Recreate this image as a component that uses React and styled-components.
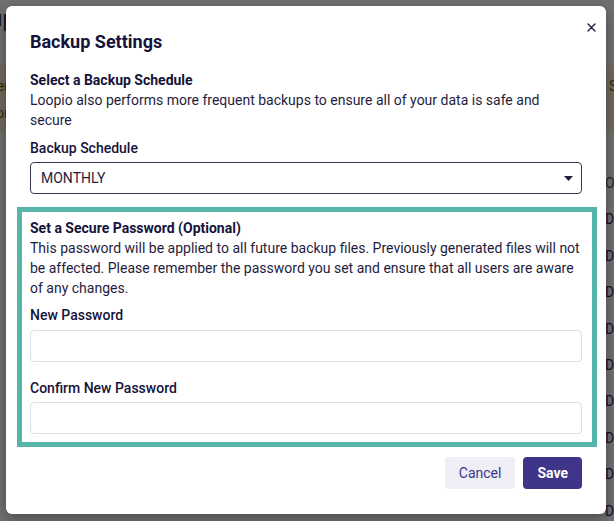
import React from "react";
import styled, { createGlobalStyle } from "styled-components";

const GlobalStyle = createGlobalStyle`
  html, body { margin: 0; padding: 0; }
  body { font-family: Roboto, "Liberation Sans", Arial, sans-serif; }
  * { box-sizing: border-box; }
`;

const Page = styled.div`
  position: relative;
  width: 614px;
  height: 521px;
  overflow: hidden;
  background: #ffffff;
`;

/* ---------- background application (behind the overlay) ---------- */
const BgApp = styled.div`
  display: flex;
  flex-direction: column;
  margin-left: -60px;
  width: 740px;
  color: #1c1a3d;
`;

const BgHeader = styled.div`
  display: flex;
  flex-direction: column;
  gap: 4px;
  padding: 6px 0 0 0;
  height: 65px;
`;

const BgTitle = styled.div`
  font-size: 22px;
  line-height: 26px;
  color: #333;
  padding-left: 2px;
`;

const BgSub = styled.div`
  font-size: 12px;
  color: #666;
  padding-left: 3px;
`;

const Banner = styled.div`
  display: flex;
  justify-content: space-between;
  background: #fff2d4;
  height: 68px;
  padding: 8px 0;
  color: #8a5a00;
  font-size: 14px;
  line-height: 27px;
`;

const BannerText = styled.div`
  width: 69px;
  text-align: right;
  white-space: nowrap;
`;

const BannerRight = styled.div`
  width: 71px;
  white-space: nowrap;
`;

const BgTable = styled.div`
  display: flex;
  flex-direction: column;
  padding-top: 40px;
`;

const BgRow = styled.div`
  display: flex;
  justify-content: flex-end;
  height: 36.4px;
  font-size: 14px;
  line-height: 20px;
  color: ${(p) => (p.$head ? "#555" : "#2c2a6a")};
`;

const BgCell = styled.div`
  width: 75px;
  white-space: nowrap;
`;

/* ---------- overlay + modal ---------- */
const Overlay = styled.div`
  position: absolute;
  inset: 0;
  background: rgba(0, 0, 0, 0.56);
  display: flex;
  padding: 6px 8px 7px 6px;
`;

const Modal = styled.div`
  position: relative;
  flex: 1;
  background: #ffffff;
  border-radius: 6px;
  box-shadow: 0 4px 14px rgba(0, 0, 0, 0.35);
  padding: 24px 24px 24px 24px;
  display: flex;
  flex-direction: column;
  color: #1c1a3d;
`;

const CloseButton = styled.button`
  position: absolute;
  top: 11px;
  right: 5px;
  width: 20px;
  height: 20px;
  border: none;
  background: transparent;
  padding: 0;
  display: flex;
  align-items: center;
  justify-content: center;
  cursor: pointer;
`;

const Title = styled.h2`
  margin: 0 0 16px 0;
  font-size: 18px;
  line-height: 24px;
  font-weight: 700;
  color: #15133a;
`;

const Section = styled.div`
  display: flex;
  flex-direction: column;
`;

const SectionHeading = styled.div`
  font-size: 14px;
  line-height: 20px;
  font-weight: 700;
  color: #15133a;
`;

const Paragraph = styled.p`
  margin: 0;
  font-size: 14px;
  line-height: 20px;
  color: #1f1d3d;
`;

const Label = styled.label`
  display: block;
  margin-top: ${(p) => p.$top}px;
  margin-bottom: ${(p) => p.$bottom}px;
  font-size: 14px;
  line-height: 20px;
  font-weight: 500;
  color: #15133a;
`;

const SelectBox = styled.div`
  display: flex;
  align-items: center;
  justify-content: space-between;
  height: 32px;
  border: 1px solid #3b3957;
  border-radius: 4px;
  padding: 0 8px 0 10px;
  font-size: 14px;
  color: #1f1d3d;
`;

const PasswordBox = styled.div`
  display: flex;
  flex-direction: column;
  margin: 13px -15px 0 -13px;
  border: 5px solid #55b5a9;
  padding: 6px 10px 8px 8px;
`;

const Input = styled.input`
  display: block;
  width: 100%;
  height: 32px;
  border: 1px solid #dfdde9;
  border-radius: 4px;
  padding: 0 10px;
  font-family: inherit;
  font-size: 14px;
  outline: none;
`;

const Footer = styled.div`
  display: flex;
  justify-content: flex-end;
  gap: 8px;
  margin-top: 10px;
`;

const Button = styled.button`
  height: 32px;
  padding: 0 14px;
  border: none;
  border-radius: 4px;
  font-family: inherit;
  font-size: 14px;
  font-weight: ${(p) => (p.$primary ? 700 : 400)};
  background: ${(p) => (p.$primary ? "#3e348a" : "#efedf6")};
  color: ${(p) => (p.$primary ? "#ffffff" : "#3e348a")};
  cursor: pointer;
`;

const Caret = () => (
  <svg width="9" height="5" viewBox="0 0 9 5">
    <path d="M0 0 H9 L4.5 5 Z" fill="#1f1d3d" />
  </svg>
);

const CloseIcon = () => (
  <svg width="9" height="9" viewBox="0 0 9 9">
    <path d="M1 1 L8 8 M8 1 L1 8" stroke="#1c1a3d" strokeWidth="1.4" strokeLinecap="round" />
  </svg>
);

export default function App() {
  const rows = Array.from({ length: 9 });
  return (
    <>
      <GlobalStyle />
      <Page>
        <BgApp>
          <BgHeader>
            <BgTitle>Backup</BgTitle>
            <BgSub>Backups</BgSub>
          </BgHeader>
          <Banner>
            <BannerText>
              Remember
              <br />
              Restore or
            </BannerText>
            <BannerRight>Schedule</BannerRight>
          </Banner>
          <BgTable>
            <BgRow $head>
              <BgCell>Options</BgCell>
            </BgRow>
            {rows.map((_, i) => (
              <BgRow key={i}>
                <BgCell>Download</BgCell>
              </BgRow>
            ))}
          </BgTable>
        </BgApp>

        <Overlay>
          <Modal>
            <CloseButton aria-label="Close">
              <CloseIcon />
            </CloseButton>
            <Title>Backup Settings</Title>
            <Section>
              <SectionHeading>Select a Backup Schedule</SectionHeading>
              <Paragraph>
                Loopio also performs more frequent backups to ensure all of your data is safe and
                secure
              </Paragraph>
              <Label $top={8} $bottom={4}>Backup Schedule</Label>
              <SelectBox>
                <span>MONTHLY</span>
                <Caret />
              </SelectBox>
            </Section>
            <PasswordBox>
              <SectionHeading>Set a Secure Password (Optional)</SectionHeading>
              <Paragraph>
                This password will be applied to all future backup files. Previously generated files
                will not be affected. Please remember the password you set and ensure that all users
                are aware of any changes.
              </Paragraph>
              <Label $top={7} $bottom={5}>New Password</Label>
              <Input type="password" />
              <Label $top={16} $bottom={4}>Confirm New Password</Label>
              <Input type="password" />
            </PasswordBox>
            <Footer>
              <Button>Cancel</Button>
              <Button $primary>Save</Button>
            </Footer>
          </Modal>
        </Overlay>
      </Page>
    </>
  );
}
